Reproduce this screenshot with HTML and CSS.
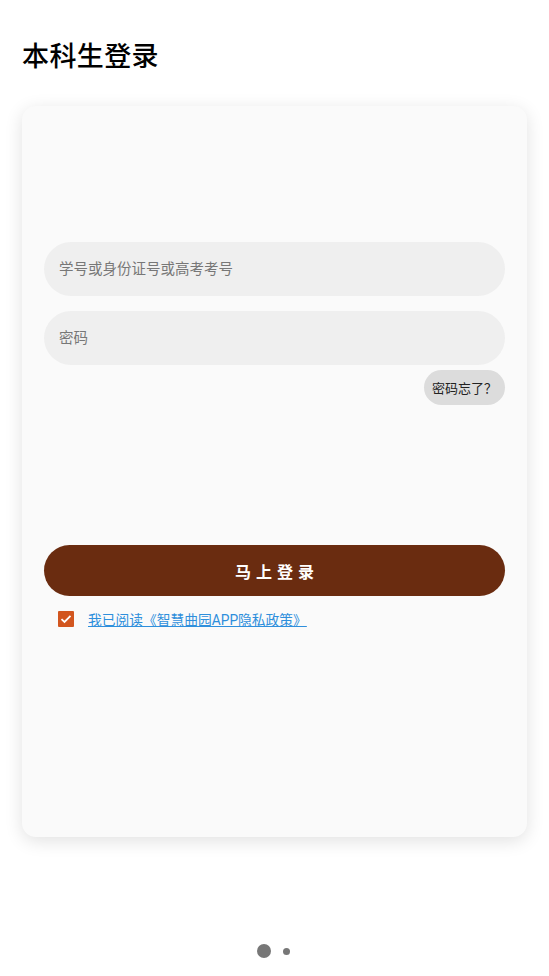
FILE: index.html
```html
<!DOCTYPE html>
<html lang="zh-CN">
<head>
    <meta charset="UTF-8">
    <meta name="viewport" content="width=device-width, initial-scale=1.0">
    <title>本科生登录</title>
    <link rel="stylesheet" href="styles.css">
</head>
<body>
    <div class="page">
        <h1 class="title">本科生登录</h1>

        <div class="card">
            <form class="login-form">
                <input type="text" class="field" placeholder="学号或身份证号或高考考号">
                <input type="password" class="field" placeholder="密码">

                <div class="forgot-row">
                    <button type="button" class="forgot">密码忘了？</button>
                </div>

                <button type="submit" class="submit">马上登录</button>

                <label class="agree">
                    <span class="check">
                        <svg width="12" height="10" viewBox="0 0 12 10"><path d="M1.5 5.2 L4.5 8 L10.5 1.8" fill="none" stroke="#fff" stroke-width="1.8"/></svg>
                    </span>
                    <a href="#" class="policy">我已阅读《智慧曲园APP隐私政策》</a>
                </label>
            </form>
        </div>

        <div class="dots">
            <span class="dot active"></span>
            <span class="dot"></span>
        </div>
    </div>
</body>
</html>
```

FILE: styles.css
```css
body {
    font-family: Roboto, "Noto Sans CJK SC", sans-serif;
    margin: 0;
    padding: 0;
    background-color: #ffffff;
    color: #000;
}
.page {
    width: 549px;
    height: 976px;
    box-sizing: border-box;
    padding: 39px 22px 0;
    display: flex;
    flex-direction: column;
}
.title {
    margin: 0;
    font-size: 27px;
    font-weight: 500;
    line-height: 36px;
    letter-spacing: 0.4px;
}
.card {
    margin-top: 31px;
    height: 731px;
    box-sizing: border-box;
    padding: 136px 22px 0;
    background: #fafafa;
    border-radius: 14px;
    box-shadow: 0 4px 18px rgba(0, 0, 0, 0.12);
}
.login-form {
    display: flex;
    flex-direction: column;
}
.field {
    height: 54px;
    margin-bottom: 15px;
    padding: 0 15px;
    border: none;
    border-radius: 27px;
    background: #efefef;
    font-family: inherit;
    font-size: 14.5px;
    color: #333;
    outline: none;
}
.field::placeholder {
    color: #777;
}
.forgot-row {
    display: flex;
    justify-content: flex-end;
    margin-top: -10px;
}
.forgot {
    height: 35px;
    padding: 0 8px;
    border: none;
    border-radius: 18px;
    background: #dcdcdc;
    font-family: inherit;
    font-size: 13px;
    color: #222;
}
.submit {
    margin-top: 140px;
    height: 51px;
    border: none;
    border-radius: 26px;
    background: #6a2c10;
    color: #fff;
    font-family: inherit;
    font-size: 16px;
    font-weight: bold;
    letter-spacing: 5px;
    text-indent: 5px;
}
.agree {
    display: flex;
    align-items: center;
    gap: 14px;
    margin: 13px 0 0 14px;
}
.check {
    width: 16px;
    height: 16px;
    background: #d2561f;
    border-radius: 1px;
    display: flex;
    align-items: center;
    justify-content: center;
}
.policy {
    font-size: 13.75px;
    color: #2e8fdc;
    text-decoration: underline;
}
.dots {
    margin-top: 107px;
    display: flex;
    justify-content: center;
    align-items: center;
    gap: 12px;
    padding-right: 3px;
}
.dot {
    width: 7px;
    height: 7px;
    border-radius: 50%;
    background: #777;
}
.dot.active {
    width: 14px;
    height: 14px;
}
```
